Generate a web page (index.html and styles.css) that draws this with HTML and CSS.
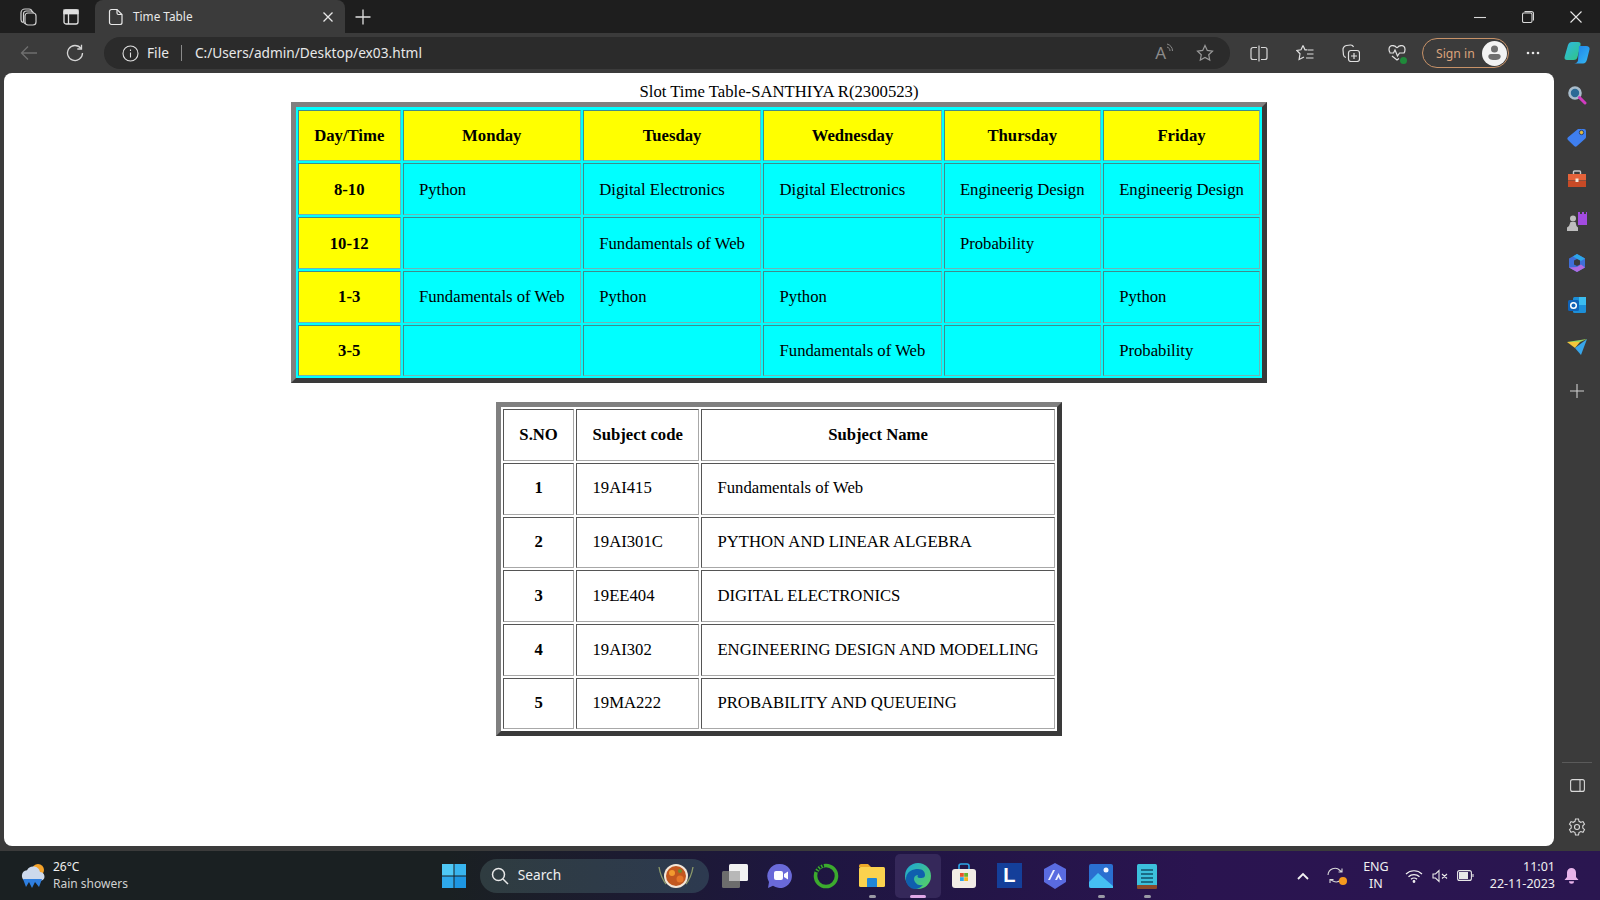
FILE: index.html
```html
<!DOCTYPE html>
<html lang="en">
  <head>
    <meta charset="UTF-8" />
    <title>Time Table</title>
    <link rel="stylesheet" href="styles.css">
  </head>
  <body>
    <div class="titlebar">
      <span class="tb-btn first">
        <svg width="20" height="20" viewBox="0 0 20 20" fill="none" stroke="#d0d0d0" stroke-width="1.2"><rect x="7" y="6" width="11" height="12" rx="3"/><path d="M5 15.5a3 3 0 0 1-2-3V6a4 4 0 0 1 4-4h4a3 3 0 0 1 3 2.5"/><path d="M7.5 17a3 3 0 0 1-2-3V7a3 3 0 0 1 3-3h4a3 3 0 0 1 3 2"/></svg>
      </span>
      <span class="tb-btn">
        <svg width="18" height="18" viewBox="0 0 18 18" fill="none" stroke="#e0e0e0" stroke-width="1.3"><rect x="2" y="2" width="14" height="14" rx="2"/><path d="M2 5.5h14M6.5 5.5V16" /><rect x="2" y="2" width="14" height="3.5" fill="#e0e0e0"/></svg>
      </span>
      <div class="tab">
        <svg width="16" height="18" viewBox="0 0 16 18" fill="none" stroke="#e8e8e8" stroke-width="1.2"><path d="M3.5 1.5h5.5l5 5v8a2 2 0 0 1-2 2h-8.500a2 2 0 0 1-2-2v-11a2 2 0 0 1 2-2z"/><path d="M9 1.500v3.500a1.500 1.500 0 0 0 1.500 1.500h3.500"/></svg>
        <span class="tab-title">Time Table</span>
        <svg class="tab-close" width="12" height="12" viewBox="0 0 12 12" stroke="#e8e8e8" stroke-width="1.300"><path d="M1.500 1.500l9 9M10.500 1.500l-9 9"/></svg>
      </div>
      <svg class="new-tab" width="16" height="16" viewBox="0 0 16 16" stroke="#e0e0e0" stroke-width="1.300"><path d="M8 .5v15M.5 8h15"/></svg>
      <div class="win-controls">
        <svg width="12" height="12" viewBox="0 0 12 12" stroke="#d8d8d8" stroke-width="1.100"><path d="M0 6.500h12"/></svg>
        <svg width="12" height="12" viewBox="0 0 12 12" fill="none" stroke="#d8d8d8" stroke-width="1.100"><rect x=".5" y="2" width="9.500" height="9.500" rx="1.500"/><path d="M2.500 .6h7a2 2 0 0 1 2 2v7"/></svg>
        <svg width="12" height="12" viewBox="0 0 12 12" stroke="#e8e8e8" stroke-width="1.100"><path d="M.5.500l11 11M11.500.500l-11 11"/></svg>
      </div>
    </div>

    <div class="toolbar">
      <svg class="back" width="18" height="16" viewBox="0 0 18 16" fill="none" stroke="#6f6f6f" stroke-width="1.300"><path d="M17 8H1.500M8 1.500 1.500 8 8 14.500"/></svg>
      <svg class="reload" width="18" height="18" viewBox="0 0 18 18" fill="none" stroke="#d6d6d6" stroke-width="1.300"><path d="M15 4.500A7.500 7.500 0 1 0 16.500 9"/><path d="M15.500 .8v4.200h-4.200"/></svg>
      <div class="address">
        <svg width="17" height="17" viewBox="0 0 17 17" fill="none" stroke="#e0e0e0" stroke-width="1.100"><circle cx="8.500" cy="8.500" r="7.500"/><path d="M8.500 7.500v5M8.500 4.500v1.400"/></svg>
        <span class="addr-file">File</span>
        <span class="addr-sep"></span>
        <span class="addr-url">C:/Users/admin/Desktop/ex03.html</span>
        <span class="addr-icons">
          <span class="read-aloud">A<svg width="8" height="11" viewBox="0 0 8 11" fill="none" stroke="#8a8a8a"><path d="M1 1c3.500 1 5.500 3.500 5.500 7M1 4c2 .6 3 2 3 4"/></svg></span>
          <svg width="18" height="18" viewBox="0 0 18 18" fill="none" stroke="#9a9a9a" stroke-width="1.200"><path d="M9 1.500l2.300 4.900 5.200.7-3.800 3.600 1 5.300-4.700-2.600-4.700 2.600 1-5.300L1.500 7.100l5.200-.7z"/></svg>
        </span>
      </div>
      <div class="tool-icons">
        <svg width="18" height="17" viewBox="0 0 18 17" fill="none" stroke="#d8d8d8" stroke-width="1.200"><path d="M7 2.500H3a2 2 0 0 0-2 2v8a2 2 0 0 0 2 2h4M11 2.500h4a2 2 0 0 1 2 2v8a2 2 0 0 1-2 2h-4M9 .5v16"/></svg>
        <svg width="18" height="18" viewBox="0 0 18 18" fill="none" stroke="#e0e0e0" stroke-width="1.200"><path d="M7 1.500l2 4.300h2.500M12 6h5.500M11 10h6.500M10 14h7.500M7 1.500 5 5.800.8 6.500l3.200 3.300-.9 5.700L8 13"/></svg>
        <svg width="18" height="18" viewBox="0 0 18 18" fill="none" stroke="#e0e0e0" stroke-width="1.200"><rect x="6.500" y="6.500" width="11" height="11" rx="2.500"/><path d="M12 9v6M9 12h6M4 13.500A3 3 0 0 1 1.500 11l-.5-5a4 4 0 0 1 3.500-4.500l4-.5a3 3 0 0 1 3 2"/></svg>
        <span class="heart">
          <svg width="18" height="17" viewBox="0 0 18 17" fill="none" stroke="#e0e0e0" stroke-width="1.200"><path d="M9 3C6.500-.5 1-.500 1 4.500c0 1 .3 2 1 3M16 8c.7-1 1-2.500 1-3.500C17-.500 11.500-.500 9 3M1.500 8h4l1.500-3 2.500 6 2-3h5M4 11l5 4 2-1.500"/></svg>
          <span class="heart-dot"></span>
        </span>
      </div>
      <div class="signin">
        <span>Sign in</span>
        <span class="avatar">
          <svg width="15" height="17" viewBox="0 0 17 19" fill="#6f6f6f"><circle cx="8.500" cy="4.500" r="4"/><path d="M1.500 13a3 3 0 0 1 3-3h8a3 3 0 0 1 3 3c0 2-2 4-7 4s-7-2-7-4z"/></svg>
        </span>
      </div>
      <svg class="more" width="14" height="4" viewBox="0 0 14 4" fill="#e8e8e8"><circle cx="2" cy="2" r="1.300"/><circle cx="7" cy="2" r="1.300"/><circle cx="12" cy="2" r="1.300"/></svg>
      <svg class="copilot" width="26" height="24" viewBox="0 0 26 24">
        <defs>
          <linearGradient id="cp1" x1="0" y1="0" x2="1" y2="1"><stop offset="0" stop-color="#2fb7e8"/><stop offset="1" stop-color="#2fc77f"/></linearGradient>
          <linearGradient id="cp2" x1="0" y1="0" x2="1" y2="1"><stop offset="0" stop-color="#1d7fe8"/><stop offset="1" stop-color="#35b9f2"/></linearGradient>
        </defs>
        <path d="M8 1h6c2 0 3 1 2.500 3l-3 12c-.5 2-1.500 3-4 3H3c-2 0-3-1.500-2.300-3.500L4 4c.7-2 2-3 4-3z" fill="url(#cp1)"/>
        <path d="M15 5h7c2.500 0 4 1.500 3.500 3.500l-2.500 10c-.7 2.500-2 4-4 4h-9c2 0 3.500-1 4-3z" fill="url(#cp2)"/>
      </svg>
    </div>

    <div class="workspace">
      <main class="page">
        <table class="timetable">
          <caption>Slot Time Table-SANTHIYA R(2300523)</caption>
          <tr>
            <th>Day/Time</th>
            <th>Monday</th>
            <th>Tuesday</th>
            <th>Wednesday</th>
            <th>Thursday</th>
            <th>Friday</th>
          </tr>
          <tr>
            <th>8-10</th>
            <td>Python</td>
            <td>Digital Electronics</td>
            <td>Digital Electronics</td>
            <td>Engineerig Design</td>
            <td>Engineerig Design</td>
          </tr>
          <tr>
            <th>10-12</th>
            <td></td>
            <td>Fundamentals of Web</td>
            <td></td>
            <td>Probability</td>
            <td></td>
          </tr>
          <tr>
            <th>1-3</th>
            <td>Fundamentals of Web</td>
            <td>Python</td>
            <td>Python</td>
            <td></td>
            <td>Python</td>
          </tr>
          <tr>
            <th>3-5</th>
            <td></td>
            <td></td>
            <td>Fundamentals of Web</td>
            <td></td>
            <td>Probability</td>
          </tr>
        </table>

        <table class="subjects">
          <tr>
            <th>S.NO</th>
            <th>Subject code</th>
            <th>Subject Name</th>
          </tr>
          <tr>
            <th>1</th>
            <td>19AI415</td>
            <td>Fundamentals of Web</td>
          </tr>
          <tr>
            <th>2</th>
            <td>19AI301C</td>
            <td>PYTHON AND LINEAR ALGEBRA</td>
          </tr>
          <tr>
            <th>3</th>
            <td>19EE404</td>
            <td>DIGITAL ELECTRONICS</td>
          </tr>
          <tr>
            <th>4</th>
            <td>19AI302</td>
            <td>ENGINEERING DESIGN AND MODELLING</td>
          </tr>
          <tr>
            <th>5</th>
            <td>19MA222</td>
            <td>PROBABILITY AND QUEUEING</td>
          </tr>
        </table>
      </main>

      <aside class="sidebar">
        <div class="side-top">
          <span class="side-item"><svg width="20" height="20" viewBox="0 0 20 20" fill="none"><circle cx="8" cy="8" r="5.500" fill="#2c6a96" stroke="#a9bccb" stroke-width="2.600"/><path d="M12.500 12.500l5.500 5.500" stroke="#d13bc0" stroke-width="3" stroke-linecap="round"/></svg></span>
          <span class="side-item"><svg width="20" height="20" viewBox="0 0 20 20"><path d="M11 2h6a2 2 0 0 1 2 2v6a2 2 0 0 1-.6 1.400L10 19a2 2 0 0 1-2.800 0L1 13a2 2 0 0 1 0-2.800z" fill="#3f7fef"/><circle cx="14.500" cy="5.500" r="2.200" fill="#e3b93a" stroke="#24407a"/></svg></span>
          <span class="side-item"><svg width="20" height="18" viewBox="0 0 20 18" fill="none"><path d="M6.500 4V2a1 1 0 0 1 1-1h5a1 1 0 0 1 1 1v2" stroke="#c8c8c8" stroke-width="1.400"/><rect x="1" y="4" width="18" height="6.500" fill="#e5633a"/><rect x="1" y="11" width="18" height="6" fill="#c74a26"/><rect x="8.500" y="8.500" width="3" height="3.500" fill="#f2e6d8"/></svg></span>
          <span class="side-item"><svg width="20" height="20" viewBox="0 0 20 20"><path d="M11 1h2v2h2V1h2v2h2V1h1v13h-9z" fill="#a24be0"/><circle cx="6" cy="7.500" r="3" fill="#bdbdbd"/><path d="M3.500 11h5l1 4 1.500 1.500V20H0v-3.500L2 15z" fill="#bdbdbd"/></svg></span>
          <span class="side-item"><svg width="20" height="20" viewBox="0 0 20 20"><path d="M10 1 18 5.500v9L10 19l-8-4.500v-9z" fill="#3f6fd8"/><path d="M10 1 18 5.500 14 8 6 3.500z" fill="#2da6e8"/><path d="M2 14.500 10 19l8-4.500-4-3-4 2.500z" fill="#b06be0"/><path d="M7 7.500 10 6l3 1.500v4L10 13l-3-1.500z" fill="#3b3b3b"/></svg></span>
          <span class="side-item"><svg width="20" height="20" viewBox="0 0 20 20"><rect x="6" y="2" width="13" height="16" rx="1.500" fill="#1c8fd8"/><rect x="12" y="2" width="7" height="8" fill="#3bbdf0"/><rect x="1" y="5" width="11" height="11" rx="1.500" fill="#0f63b8"/><circle cx="6.500" cy="10.500" r="2.800" fill="none" stroke="#fff" stroke-width="1.500"/></svg></span>
          <span class="side-item"><svg width="20" height="16" viewBox="0 0 20 16"><path d="M0 3h13L8 9z" fill="#f3c63c"/><path d="M20 0 8 9l6 7z" fill="#38a6ea"/><path d="M20 0 0 3h13z" fill="#9fd65a"/></svg></span>
          <span class="side-item side-plus"><svg width="14" height="14" viewBox="0 0 14 14" stroke="#cfcfcf" stroke-width="1.100"><path d="M7 0v14M0 7h14"/></svg></span>
        </div>
        <div class="side-bottom">
          <span class="side-rule"></span>
          <svg width="15" height="13" viewBox="0 0 15 13" fill="none" stroke="#d8d8d8" stroke-width="1.100"><rect x=".6" y=".6" width="13.800" height="11.800" rx="2"/><path d="M10 .6v11.800"/></svg>
          <svg width="18" height="18" viewBox="0 0 18 18" fill="none" stroke="#d8d8d8" stroke-width="1.100"><circle cx="9" cy="9" r="2.500"/><path d="M7.500 1h3l.5 2.300 1.800 1 2.200-.7 1.500 2.600-1.700 1.600v2.300l1.700 1.600-1.500 2.600-2.200-.7-1.800 1-.5 2.400h-3L7 14.600l-1.800-1-2.200.7-1.500-2.600 1.700-1.600V7.800L1.500 6.200 3 3.600l2.200.7 1.800-1z"/></svg>
        </div>
      </aside>
    </div>

    <footer class="taskbar">
      <div class="weather">
        <svg width="28" height="28" viewBox="0 0 28 28"><circle cx="19" cy="8" r="6" fill="#f5a32a"/><path d="M7 19a5.500 5.500 0 0 1 1-10.800A7 7 0 0 1 21 10a4.500 4.500 0 0 1 2 8.500z" fill="#cdd9ec"/><path d="M4 17l3 8 3-5 3 6 3-6 4 5 3-8z" fill="#2f7fe0"/></svg>
        <div class="weather-text">
          <span class="temp">26°C</span>
          <span class="cond">Rain showers</span>
        </div>
      </div>
      <div class="task-center">
        <span class="task-btn">
          <svg width="26" height="26" viewBox="0 0 26 26" fill="#3cc0f2"><rect x="1" y="1" width="11.500" height="11.500" fill="#4fc8f5"/><rect x="13.500" y="1" width="11.500" height="11.500" fill="#38b4ee"/><rect x="1" y="13.500" width="11.500" height="11.500" fill="#2ea8ea"/><rect x="13.500" y="13.500" width="11.500" height="11.500" fill="#1d96e2"/></svg>
        </span>
        <div class="search">
          <svg width="18" height="18" viewBox="0 0 18 18" fill="none" stroke="#e8e8e8" stroke-width="1.500"><circle cx="7.500" cy="7.500" r="6"/><path d="M12 12l5 5"/></svg>
          <span>Search</span>
          <svg class="search-art" width="46" height="28" viewBox="0 0 46 28" fill="none"><path d="M6 5c1 6 3 12 7 17M40 5c-1 6-3 12-7 17" stroke="#8c9a6a" stroke-width="1.300"/><circle cx="23" cy="14" r="12" fill="#f3e6d8"/><circle cx="23" cy="14" r="10" fill="#c2571f"/><circle cx="19" cy="11" r="3" fill="#f29a2e"/><circle cx="27" cy="17" r="3.500" fill="#e5762a"/><circle cx="27" cy="9" r="2" fill="#6e8a2e"/></svg>
        </div>
        <span class="task-btn">
          <svg width="28" height="26" viewBox="0 0 28 26"><rect x="8" y="1" width="19" height="17" rx="1.500" fill="#f2f2f2"/><rect x="1" y="8" width="18" height="17" rx="1.500" fill="#6d6d6d"/><rect x="8" y="8" width="11" height="10" fill="#b8b8b8"/></svg>
        </span>
        <span class="task-btn">
          <svg width="26" height="28" viewBox="0 0 26 28"><path d="M13 2a12 12 0 1 1-7 21.800L1 26l1-6A12 12 0 0 1 13 2z" fill="#6a6ad8"/><rect x="7" y="9" width="9" height="9" rx="2" fill="#fff"/><path d="M17 12l4-2.500v8L17 15z" fill="#fff"/></svg>
        </span>
        <span class="task-btn">
          <svg width="26" height="26" viewBox="0 0 26 26" fill="none"><circle cx="13" cy="13" r="10.500" stroke="#3cab2e" stroke-width="3.600"/><path d="M3 9a11 11 0 0 1 8-6.500" stroke="#123" stroke-width="3.600" stroke-dasharray="1.500 1.500"/></svg>
        </span>
        <span class="task-btn active-dot">
          <svg width="26" height="24" viewBox="0 0 26 24"><path d="M0 2a2 2 0 0 1 2-2h7l3 3h-12z" fill="#eca92a"/><rect y="3" width="26" height="20" rx="1.500" fill="#fbd24e"/><path d="M8 15a1 1 0 0 1 1-1h8a1 1 0 0 1 1 1v8H8z" fill="#1f86d8"/></svg>
        </span>
        <span class="task-btn current">
          <svg width="26" height="26" viewBox="0 0 26 26"><defs><linearGradient id="edge" x1="0" y1="0" x2="1" y2="1"><stop offset="0" stop-color="#1aa5dc"/><stop offset="1" stop-color="#5ad25a"/></linearGradient></defs><circle cx="13" cy="13" r="13" fill="url(#edge)"/><path d="M1 15C2 8 8 6 13 6c5 0 7 3 7 6s-3 3-5 3c-2.500 0-3-2-2-3-4 0-5 4-3 7 1.500 2.500 5 4 8 3-2.500 2.500-5 4-8 4C5 26 0 21 1 15z" fill="#0f5fae"/></svg>
        </span>
        <span class="task-btn">
          <svg width="24" height="26" viewBox="0 0 24 26" fill="none"><path d="M7 7V3a2 2 0 0 1 2-2h6a2 2 0 0 1 2 2v4" stroke="#2da6e8" stroke-width="1.600"/><rect y="6" width="24" height="19" rx="3" fill="#f1ece6"/><rect x="8" y="10" width="3.800" height="3.800" fill="#e8542e"/><rect x="12.200" y="10" width="3.800" height="3.800" fill="#6bb52e"/><rect x="8" y="14.200" width="3.800" height="3.800" fill="#2da6e8"/><rect x="12.200" y="14.200" width="3.800" height="3.800" fill="#f2b51e"/></svg>
        </span>
        <span class="task-btn">
          <span class="l-icon">L</span>
        </span>
        <span class="task-btn">
          <svg width="24" height="26" viewBox="0 0 24 26"><path d="M12 0l11 6v13l-11 7L1 19V6z" fill="#5a6be0"/><path d="M5 17l5-10h2l-5 10zM12 17l3.500-7 3.500 7h-2l-1.500-3-1.500 3z" fill="#eef0ff"/></svg>
        </span>
        <span class="task-btn active-dot">
          <svg width="24" height="24" viewBox="0 0 24 24"><rect width="24" height="24" rx="2" fill="#2a6fd0"/><path d="M0 22V18L9 9l15 13v2H2a2 2 0 0 1-2-2z" fill="#45c0f2"/><circle cx="17" cy="6" r="2.500" fill="#f4f8ff"/></svg>
        </span>
        <span class="task-btn active-dot">
          <svg width="20" height="26" viewBox="0 0 20 26"><rect y="1" width="20" height="22" rx="1.500" fill="#3cc0dc"/><rect y="22" width="20" height="4" rx="1" fill="#8c4a2a"/><path d="M4 7h12M4 11h12M4 15h12M4 19h12" stroke="#10506a" stroke-width="1.500"/></svg>
        </span>
      </div>
      <div class="tray">
        <svg class="tray-chevron" width="12" height="8" viewBox="0 0 12 8" fill="none" stroke="#f2f2f2" stroke-width="1.800"><path d="M1 7l5-5 5 5"/></svg>
        <span class="tray-sync">
          <svg width="20" height="18" viewBox="0 0 20 18" fill="none" stroke="#d8d8d8" stroke-width="1.100"><path d="M1 8a7 7 0 0 1 12-4.500l2 1.500M15 1.500V5h-3.500M14 13a7 7 0 0 1-8 1L3 12.500M3 16v-3.500h3.500"/></svg>
          <span class="sync-dot"></span>
        </span>
        <span class="lang">ENG<br />IN</span>
        <span class="tray-icons">
          <svg width="18" height="14" viewBox="0 0 18 14" fill="none" stroke="#f2f2f2" stroke-width="1.200"><path d="M1 5a11.500 11.500 0 0 1 16 0M3.500 7.800a8 8 0 0 1 11 0M6 10.300a4.300 4.300 0 0 1 6 0"/><circle cx="9" cy="12.500" r=".8" fill="#f2f2f2"/></svg>
          <svg width="16" height="14" viewBox="0 0 16 14" fill="none" stroke="#e8e8e8" stroke-width="1.100"><path d="M1 5v4h2.500L7 12.500v-11L3.500 5zM10 5l5 4.500M15 5l-5 4.500"/></svg>
          <svg width="17" height="11" viewBox="0 0 17 11" fill="none" stroke="#e8e8e8" stroke-width="1.100"><rect x=".6" y=".6" width="13.800" height="9.800" rx="2"/><rect x="2" y="2" width="9" height="7" fill="#e8e8e8" stroke="none"/><path d="M16 4v3"/></svg>
        </span>
        <span class="clock">11:01<br />22-11-2023</span>
        <svg class="bell" width="15" height="16" viewBox="0 0 15 16" fill="#e8b4ea"><path d="M7.500 0A4.500 4.500 0 0 0 3 4.500V9l-2.500 3h14L12 9V4.500A4.500 4.500 0 0 0 7.500 0z"/><path d="M5 13.200h5a2.500 2.500 0 0 1-5 0z"/></svg>
      </div>
    </footer>
  </body>
</html>
```

FILE: styles.css
```css
* {
  box-sizing: border-box;
}
html,
body {
  margin: 0;
  padding: 0;
  height: 100%;
}
body {
  width: 1600px;
  height: 900px;
  overflow: hidden;
  display: flex;
  flex-direction: column;
  background-color: #3b3b3b;
  font-family: "Noto Sans", "Open Sans", sans-serif;
  color: #e8e8e8;
}
svg {
  display: block;
  flex: none;
}

/* title bar */
.titlebar {
  height: 33px;
  display: flex;
  align-items: center;
  background-color: #1e1e1e;
}
.tb-btn {
  width: 43px;
  display: flex;
  justify-content: center;
}
.tb-btn.first {
  margin-left: 6px;
}
.tab {
  width: 250px;
  height: 33px;
  margin-left: 3px;
  padding: 0 11px 0 13px;
  display: flex;
  align-items: center;
  background-color: #3b3b3b;
  border-radius: 8px 8px 0 0;
}
.tab-title {
  flex: 1;
  margin: -2px 0 0 9px;
  font-size: 11.800px;
}
.new-tab {
  margin-left: 10px;
}
.win-controls {
  margin-left: auto;
  padding-right: 18px;
  display: flex;
  gap: 36px;
}

/* toolbar */
.toolbar {
  height: 40px;
  display: flex;
  align-items: center;
  background-color: #3b3b3b;
}
.back {
  margin-left: 20px;
}
.reload {
  margin-left: 28px;
}
.address {
  width: 1126px;
  height: 32px;
  margin-left: 20px;
  padding: 0 16px 0 18px;
  display: flex;
  align-items: center;
  background-color: #2b2b2b;
  border-radius: 16px;
  font-size: 13.700px;
}
.addr-file {
  margin: -1px 0 0 8px;
}
.addr-sep {
  width: 1px;
  height: 16px;
  margin: 0 13px 0 12px;
  background-color: #8a8a8a;
}
.addr-url {
  margin-top: -1px;
}
.addr-icons {
  margin-left: auto;
  display: flex;
  align-items: center;
  gap: 22px;
}
.read-aloud {
  display: flex;
  color: #8a8a8a;
  font-size: 17px;
  line-height: 20px;
}
.tool-icons {
  margin-left: 20px;
  display: flex;
  align-items: center;
  gap: 28px;
}
.heart {
  position: relative;
}
.heart-dot {
  position: absolute;
  right: -1px;
  bottom: -2px;
  width: 7px;
  height: 7px;
  border-radius: 50%;
  background-color: #1f8a3a;
}
.signin {
  width: 87px;
  height: 30px;
  margin-left: 16px;
  padding: 0 1px 0 13px;
  display: flex;
  align-items: center;
  justify-content: space-between;
  border: 1px solid #c79268;
  border-radius: 15px;
  color: #dba47c;
  font-size: 12.200px;
}
.avatar {
  width: 25px;
  height: 25px;
  display: flex;
  align-items: center;
  justify-content: center;
  border-radius: 50%;
  background-color: #f2f2f2;
}
.more {
  margin-left: 17px;
}
.copilot {
  margin-left: 24px;
}

/* page area */
.workspace {
  height: 773px;
  display: flex;
  flex: none;
}
.page {
  width: 1550px;
  height: 773px;
  margin-left: 4px;
  padding-top: 10px;
  background-color: #fff;
  border-radius: 8px;
  font-family: "Liberation Serif", "Times New Roman", serif;
  font-size: 16.700px;
  line-height: 18.700px;
  color: #000;
}
table {
  margin: 0 auto;
  border-spacing: 2px;
  border-style: solid;
  border-width: 5px;
  border-color: #808080 #3a3a3a #3a3a3a #808080;
}
th,
td {
  padding: 15.500px 15.300px;
  border-width: 1px;
  border-style: solid;
}
.timetable {
  padding-top: 1px;
  background-color: #00ffff;
}
.timetable th,
.timetable td {
  padding-top: 16.500px;
  padding-bottom: 14.500px;
  border-color: #3f8c8c #6fb5b5 #6fb5b5 #3f8c8c;
}
.timetable th {
  background-color: #ffff00;
}
.timetable td {
  background-color: #00ffff;
}
.subjects {
  margin-top: 19px;
  background-color: #fff;
}
.subjects th,
.subjects td {
  border-color: #555 #a8a8a8 #a8a8a8 #555;
}

/* side panel */
.sidebar {
  width: 46px;
  padding: 1px 0 10px;
  display: flex;
  flex-direction: column;
  justify-content: space-between;
  align-items: center;
}
.side-top {
  display: flex;
  flex-direction: column;
  align-items: center;
}
.side-item {
  height: 42px;
  display: flex;
  align-items: center;
}
.side-plus {
  margin-top: 2px;
}
.side-bottom {
  display: flex;
  flex-direction: column;
  align-items: center;
}
.side-rule {
  width: 30px;
  height: 1px;
  margin-bottom: 16px;
  background-color: #5a5a5a;
}
.side-bottom svg + svg {
  margin-top: 26px;
}

/* taskbar */
.taskbar {
  height: 49px;
  margin-top: 5px;
  position: relative;
  display: flex;
  align-items: center;
  background: linear-gradient(90deg, #1a2022 0%, #1a2022 28%, #1e1640 50%, #2a1450 75%, #2a1650 100%);
  font-size: 12.500px;
  color: #f0f0f0;
}
.weather {
  width: 431px;
  padding-left: 19px;
  display: flex;
  align-items: center;
  gap: 6px;
}
.weather-text {
  display: flex;
  flex-direction: column;
  font-size: 12px;
  line-height: 16.500px;
}
.cond {
  color: #d0d0d0;
}
.task-center {
  display: flex;
  align-items: center;
}
.task-btn {
  position: relative;
  width: 45.800px;
  height: 44px;
  display: flex;
  align-items: center;
  justify-content: center;
}
.task-btn.current {
  background-color: #35285a;
  border-radius: 5px;
}
.task-btn.current::after,
.task-btn.active-dot::after {
  content: "";
  position: absolute;
  bottom: 0;
  left: 50%;
  width: 7px;
  height: 3px;
  margin-left: -3px;
  border-radius: 2px;
  background-color: #9a9aa5;
}
.task-btn.current::after {
  width: 16px;
  margin-left: -8px;
  background-color: #e0a8e8;
}
.search {
  width: 229px;
  height: 34px;
  margin: 0 3px;
  padding: 0 10px 0 11px;
  display: flex;
  align-items: center;
  border-radius: 17px;
  background: linear-gradient(90deg, #2f3c40, #2d3a50);
  font-size: 13.700px;
}
.search span {
  margin: -2px 0 0 9px;
}
.search-art {
  margin-left: auto;
}
.l-icon {
  width: 25px;
  height: 25px;
  display: flex;
  align-items: center;
  justify-content: center;
  background-color: #143f9a;
  font-family: "Liberation Sans", sans-serif;
  font-size: 20px;
  font-weight: bold;
  color: #fff;
}
.tray {
  margin-left: auto;
  padding-right: 21px;
  display: flex;
  align-items: center;
}
.tray-sync {
  position: relative;
  margin-left: 18px;
}
.sync-dot {
  position: absolute;
  right: 0;
  bottom: 0;
  width: 8px;
  height: 8px;
  border-radius: 50%;
  background-color: #f59a1e;
}
.lang {
  margin-left: 16px;
  text-align: center;
  line-height: 16.500px;
}
.tray-icons {
  margin-left: 16px;
  display: flex;
  align-items: center;
  gap: 9px;
}
.clock {
  margin-left: 16px;
  text-align: right;
  line-height: 16.500px;
}
.bell {
  margin-left: 9px;
}
```
